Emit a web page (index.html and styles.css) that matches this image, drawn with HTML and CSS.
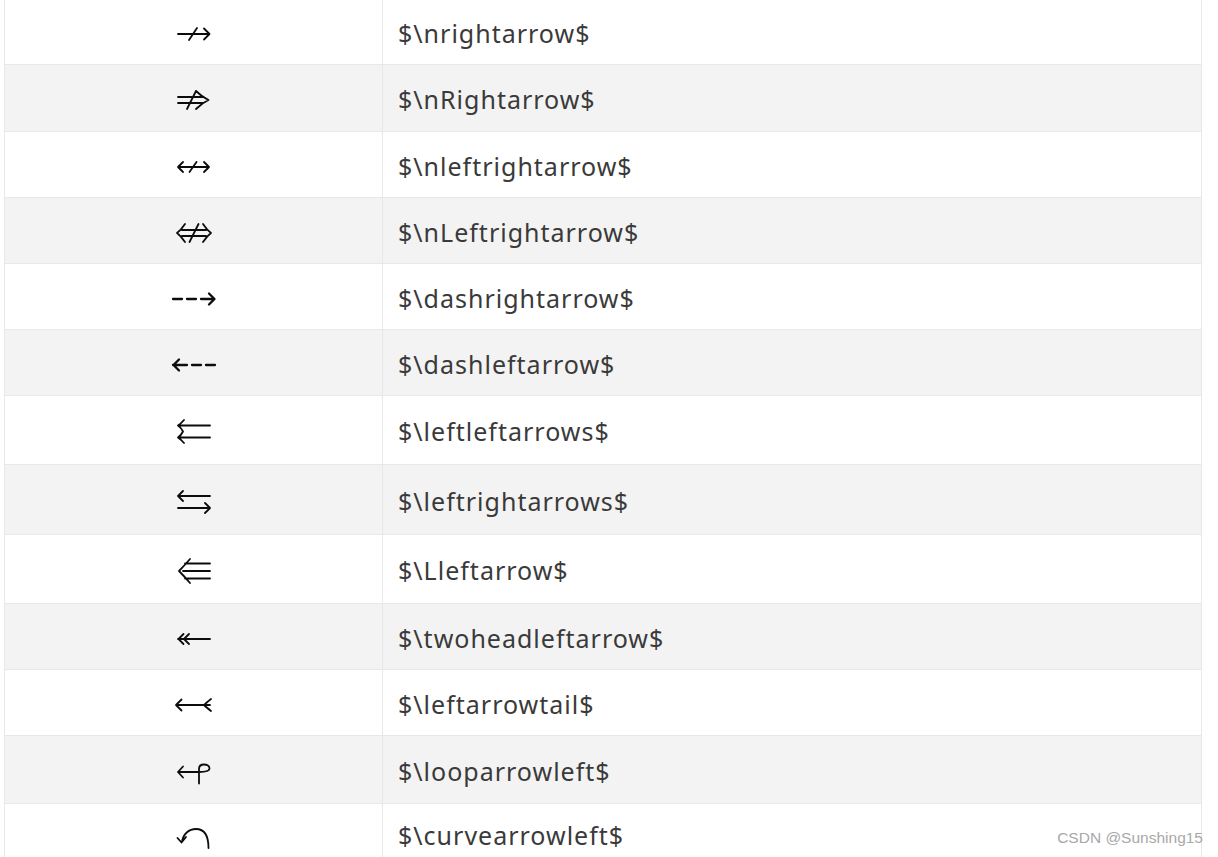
FILE: index.html
```html
<!DOCTYPE html>
<html lang="zh-CN">
<head>
<meta charset="utf-8">
<title>Arrows</title>
<link rel="stylesheet" href="styles.css">
</head>
<body>
<div class="sheet">
  <div class="row h65">
    <div class="sym"><svg class="ico" viewBox="0 0 48 24"><path d="M8 12H39M34 6.5L39.5 12L34 17.5M19 18L27 6"/></svg></div>
    <div class="code">$\nrightarrow$</div>
  </div>
  <div class="row alt h67">
    <div class="sym"><svg class="ico" viewBox="0 0 48 24"><path d="M8 9H33M8 15H33M26 3Q32 9 38.5 12Q32 15 26 21M17 21L26 3"/></svg></div>
    <div class="code">$\nRightarrow$</div>
  </div>
  <div class="row">
    <div class="sym"><svg class="ico" viewBox="0 0 48 24"><path d="M8 12H39M13 7L8 12L13 17M34 7L39 12L34 17M19.5 17L26.5 7"/></svg></div>
    <div class="code">$\nleftrightarrow$</div>
  </div>
  <div class="row alt">
    <div class="sym"><svg class="ico" viewBox="0 0 48 24"><path d="M12 9H36M12 15H36M15 3Q11 9 7 12Q11 15 15 21M33 3Q37 9 41 12Q37 15 33 21M19.5 21L28.5 3"/></svg></div>
    <div class="code">$\nLeftrightarrow$</div>
  </div>
  <div class="row">
    <div class="sym"><svg class="ico bold" viewBox="0 0 48 24"><path d="M3 12H12M17 12H26M31 12H44M39 6.5L44.5 12L39 17.5"/></svg></div>
    <div class="code">$\dashrightarrow$</div>
  </div>
  <div class="row alt">
    <div class="sym"><svg class="ico bold" viewBox="0 0 48 24"><path d="M3 12H17M22 12H31M36 12H45M9 6.5L3.5 12L9 17.5"/></svg></div>
    <div class="code">$\dashleftarrow$</div>
  </div>
  <div class="row h69">
    <div class="sym"><svg class="ico" viewBox="0 0 48 24"><path d="M8 5.5H40M8 17.5H40M14 0Q11 3.5 8 5.5Q11 7.5 13 11.5Q11 15.5 8 17.5Q11 19.5 14 23"/></svg></div>
    <div class="code">$\leftleftarrows$</div>
  </div>
  <div class="row alt h70">
    <div class="sym"><svg class="ico" viewBox="0 0 48 24"><path d="M8 6H40M8 18H40M13 1Q10 4 8 6Q10 8 13 11M35 13Q38 16 40 18Q38 20 35 23"/></svg></div>
    <div class="code">$\leftrightarrows$</div>
  </div>
  <div class="row h69">
    <div class="sym"><svg class="ico" viewBox="0 0 48 24"><path d="M15 4.5H40M13 12H40M15 19.5H40M20 0Q14 7 9 12Q14 17 20 24"/></svg></div>
    <div class="code">$\Lleftarrow$</div>
  </div>
  <div class="row alt">
    <div class="sym"><svg class="ico" viewBox="0 0 48 24"><path d="M8 12H40M13.5 7L8.5 12L13.5 17M19 7L14 12L19 17"/></svg></div>
    <div class="code">$\twoheadleftarrow$</div>
  </div>
  <div class="row">
    <div class="sym"><svg class="ico" viewBox="0 0 48 24"><path d="M6 12H40M11.5 6.5L6 12L11.5 17.5M41 6Q36 10 34 12Q36 14 41 18"/></svg></div>
    <div class="code">$\leftarrowtail$</div>
  </div>
  <div class="row alt h68">
    <div class="sym"><svg class="ico" viewBox="0 0 48 24"><path d="M8 12H29M13 6.5L8 12L13 17.5M29 23.5V9C29 6 31 4.5 34 4.5C37 4.5 39.5 6 39.5 8.5C39.5 11 37 12 29 12"/></svg></div>
    <div class="code">$\looparrowleft$</div>
  </div>
  <div class="row last">
    <div class="sym"><svg class="ico" viewBox="0 0 48 24"><path d="M12 18C13 10 19 5 26 5C33 5 38.5 10 38.5 24M7.5 14L11.5 18.5L16 13"/></svg></div>
    <div class="code">$\curvearrowleft$</div>
  </div>
</div>
<div class="mark">CSDN @Sunshing15</div>
</body>
</html>
```
FILE: styles.css
```css
html, body {
  margin: 0;
  padding: 0;
  background: #fff;
  height: 857px;
  overflow: hidden;
}
body {
  position: relative;
  font-family: "Noto Sans", "Open Sans", "Noto Sans CJK SC", sans-serif;
}
.sheet {
  margin-left: 4px;
  width: 1198px;
  border-left: 1px solid #e8e8e8;
  border-right: 1px solid #e8e8e8;
  box-sizing: border-box;
}
.row {
  display: flex;
  height: 66px;
  box-sizing: border-box;
  border-bottom: 1px solid #e8e8e8;
  background: #fff;
}
.row.alt { background: #f3f3f3; }
.row.h65 { height: 65px; }
.row.h67 { height: 67px; }
.row.h68 { height: 68px; }
.row.h69 { height: 69px; }
.row.h70 { height: 70px; }
.row.last { height: 60px; border-bottom: none; }
.sym {
  width: 378px;
  flex: none;
  border-right: 1px solid #e8e8e8;
  display: flex;
  align-items: center;
  justify-content: center;
  padding-top: 4px;
  box-sizing: border-box;
}
.ico {
  width: 48px;
  height: 24px;
  fill: none;
  stroke: #0c0c0c;
  stroke-width: 1.8;
  stroke-linecap: round;
  stroke-linejoin: round;
  overflow: visible;
}
.ico.bold { stroke-width: 2.3; }
.code {
  flex: 1;
  display: flex;
  align-items: center;
  padding-left: 15px;
  padding-top: 2px;
  font-size: 25px;
  letter-spacing: 1px;
  color: #3a3a3a;
}
.mark {
  position: absolute;
  right: 15px;
  top: 829px;
  font-size: 15.5px;
  color: #a8a8a8;
  font-family: "Liberation Sans", Arial, sans-serif;
}
```
